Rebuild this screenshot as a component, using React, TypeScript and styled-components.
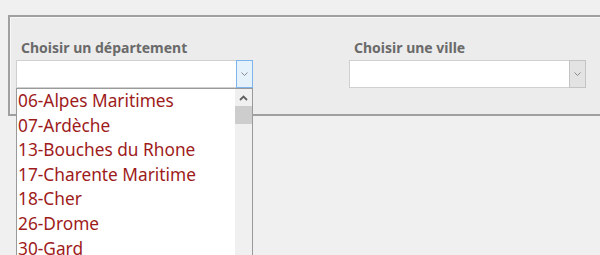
import React from "react";
import styled, { createGlobalStyle } from "styled-components";

const Global = createGlobalStyle`
  html, body { margin: 0; padding: 0; background: #f0f0f0; overflow: hidden; }
  body { width: 600px; height: 255px; font-family: "Noto Sans", "Open Sans", sans-serif; }
`;

const Page = styled.div`
  padding: 15px 0 0 8px;
  height: 255px;
  box-sizing: border-box;
`;

const Panel = styled.div`
  position: relative;
  width: 592px;
  height: 101px;
  box-sizing: border-box;
  background: #ececec;
  border-top: 2px solid #a0a0a0;
  border-left: 2px solid #a0a0a0;
  border-bottom: 2px solid #a0a0a0;
  box-shadow: inset 1px 1px 0 #f8f8f8;
  display: flex;
  gap: 96px;
  padding: 21px 0 0 6px;
`;

const Field = styled.div`
  position: relative;
  display: flex;
  flex-direction: column;
  width: 237px;
`;

const Label = styled.div`
  font-weight: 700;
  font-size: 14px;
  color: #6a6a6a;
  padding-left: 5px;
  height: 22px;
  line-height: 20px;
`;

const Combo = styled.div`
  display: flex;
  height: 28px;
  box-sizing: border-box;
  background: #fff;
  border: 1px solid #d0d0d0;
`;

const ComboText = styled.div`
  flex: 1;
`;

const ComboButton = styled.div<{ $active?: boolean }>`
  width: 17px;
  margin: -1px -1px -1px 0;
  box-sizing: border-box;
  display: flex;
  align-items: center;
  justify-content: center;
  background: ${(p) => (p.$active ? "#e5f1fb" : "#e3e3e3")};
  border: 1px solid ${(p) => (p.$active ? "#7eb4ea" : "#c4c4c4")};
`;

const List = styled.div`
  position: absolute;
  top: 50px;
  left: 0;
  width: 237px;
  height: 167px;
  box-sizing: border-box;
  background: #fff;
  border: 1px solid #9a9a9a;
  border-bottom: none;
  display: flex;
  overflow: hidden;
  z-index: 2;
`;

const Items = styled.ul`
  flex: 1;
  margin: 0;
  padding: 0 0 0 1px;
  list-style: none;
`;

const Item = styled.li`
  font-size: 17.3px;
  line-height: 24.6px;
  color: #9e1b1b;
  white-space: nowrap;
`;

const Scrollbar = styled.div`
  width: 17px;
  background: #f0f0f0;
  display: flex;
  flex-direction: column;
`;

const ArrowBox = styled.div`
  height: 17px;
  display: flex;
  align-items: center;
  justify-content: center;
`;

const Thumb = styled.div`
  height: 18px;
  background: #cdcdcd;
`;

const Chevron = ({ up }: { up?: boolean }) => (
  <svg width="9" height="6" viewBox="0 0 9 6">
    {up ? (
      <path d="M1 5 L4.5 1.5 L8 5" fill="none" stroke="#606060" strokeWidth="1.8" />
    ) : (
      <path d="M1.5 1.5 L4.5 4.5 L7.5 1.5" fill="none" stroke="#8a8a8a" strokeWidth="1" />
    )}
  </svg>
);

const items = [
  "06-Alpes Maritimes",
  "07-Ardèche",
  "13-Bouches du Rhone",
  "17-Charente Maritime",
  "18-Cher",
  "26-Drome",
  "30-Gard",
];

export default function App() {
  return (
    <>
      <Global />
      <Page>
        <Panel>
          <Field>
            <Label>Choisir un département</Label>
            <Combo>
              <ComboText />
              <ComboButton $active>
                <Chevron />
              </ComboButton>
            </Combo>
            <List>
              <Items>
                {items.map((t) => (
                  <Item key={t}>{t}</Item>
                ))}
              </Items>
              <Scrollbar>
                <ArrowBox>
                  <Chevron up />
                </ArrowBox>
                <Thumb />
              </Scrollbar>
            </List>
          </Field>
          <Field>
            <Label>Choisir une ville</Label>
            <Combo>
              <ComboText />
              <ComboButton>
                <Chevron />
              </ComboButton>
            </Combo>
          </Field>
        </Panel>
      </Page>
    </>
  );
}
